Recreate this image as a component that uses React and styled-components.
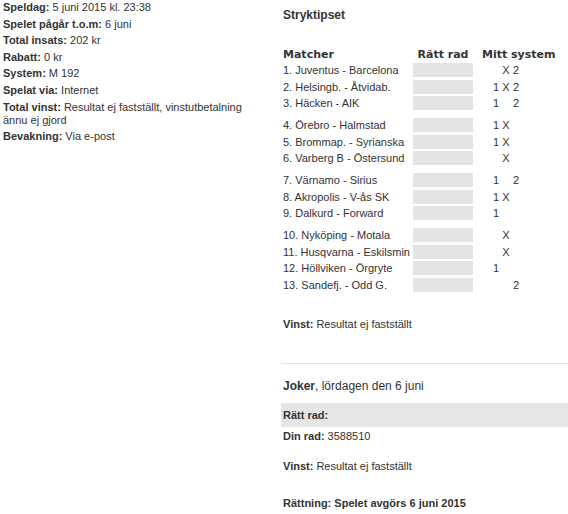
import React from "react";
import styled, { createGlobalStyle } from "styled-components";

const Global = createGlobalStyle`
  html, body { margin: 0; padding: 0; background: #fff; }
  body { font-family: "Liberation Sans", Arial, sans-serif; color: #333; font-size: 11px; }
`;

const Page = styled.div`
  display: grid;
  grid-template-columns: 250px 1fr;
  column-gap: 28px;
  padding-left: 3px;
  width: 568px;
  box-sizing: border-box;
`;

const LeftCol = styled.div`
  display: flex;
  flex-direction: column;
  gap: 3.6px;
  padding-top: 1px;
`;

const InfoLine = styled.div`
  font-size: 11px;
  line-height: 13px;
`;

const Label = styled.b`
  font-weight: bold;
  color: #333;
`;

const RightCol = styled.div`
  display: flex;
  flex-direction: column;
`;

const Inner = styled.div`
  padding-left: 2px;
  display: flex;
  flex-direction: column;
`;

const GameTitle = styled.div`
  font-weight: bold;
  font-size: 12px;
  line-height: 14px;
  margin-top: 8px;
`;

const Table = styled.div`
  margin-top: 24px;
  display: flex;
  flex-direction: column;
`;

const HeadRow = styled.div`
  display: grid;
  grid-template-columns: 130px 60px 1fr;
  height: 16px;
  align-items: center;
  font-family: "DejaVu Sans", Verdana, sans-serif;
  font-weight: bold;
  font-size: 11px;
  color: #333;
  white-space: nowrap;
`;

const HeadCell = styled.div`
  text-align: ${(p) => p.$align || "left"};
  padding-left: ${(p) => p.$pad || 0}px;
`;

const Group = styled.div`
  display: flex;
  flex-direction: column;
  & + & { margin-top: 5.5px; }
`;

const Row = styled.div`
  display: grid;
  grid-template-columns: 130px 60px 1fr;
  height: 16.5px;
  align-items: center;
  font-size: 11px;
`;

const MatchName = styled.div`
  white-space: nowrap;
  overflow: hidden;
`;

const ResultBox = styled.div`
  height: 14px;
  background: #e4e4e4;
`;

const Picks = styled.div`
  display: flex;
  margin-left: 18px;
`;

const Pick = styled.span`
  width: 10px;
  text-align: center;
`;

const Para = styled.div`
  font-size: 11px;
  line-height: 13px;
  margin-top: ${(p) => p.$mt || 0}px;
`;

const Divider = styled.hr`
  border: 0;
  border-top: 1px solid #e2e2e2;
  margin: 32px 0 0 0;
  height: 0;
`;

const JokerTitle = styled.div`
  font-size: 12px;
  line-height: 14px;
  margin-top: 15px;
  padding-left: 2px;
`;

const Band = styled.div`
  margin-top: 10px;
  height: 24px;
  background: #e5e5e5;
  display: flex;
  align-items: center;
  padding-left: 2px;
  font-size: 11px;
  font-weight: bold;
`;

const groups = [
  [
    ["1. Juventus - Barcelona", "", "X", "2"],
    ["2. Helsingb. - Åtvidab.", "1", "X", "2"],
    ["3. Häcken - AIK", "1", "", "2"],
  ],
  [
    ["4. Örebro - Halmstad", "1", "X", ""],
    ["5. Brommap. - Syrianska", "1", "X", ""],
    ["6. Varberg B - Östersund", "", "X", ""],
  ],
  [
    ["7. Värnamo - Sirius", "1", "", "2"],
    ["8. Akropolis - V-ås SK", "1", "X", ""],
    ["9. Dalkurd - Forward", "1", "", ""],
  ],
  [
    ["10. Nyköping - Motala", "", "X", ""],
    ["11. Husqvarna - Eskilsmin", "", "X", ""],
    ["12. Höllviken - Örgryte", "1", "", ""],
    ["13. Sandefj. - Odd G.", "", "", "2"],
  ],
];

const info = [
  ["Speldag:", "5 juni 2015 kl. 23:38"],
  ["Spelet pågår t.o.m:", "6 juni"],
  ["Total insats:", "202 kr"],
  ["Rabatt:", "0 kr"],
  ["System:", "M 192"],
  ["Spelat via:", "Internet"],
  ["Total vinst:", "Resultat ej fastställt, vinstutbetalning ännu ej gjord"],
  ["Bevakning:", "Via e-post"],
];

export default function App() {
  return (
    <>
      <Global />
      <Page>
        <LeftCol>
          {info.map(([l, v]) => (
            <InfoLine key={l}>
              <Label>{l}</Label> {v}
            </InfoLine>
          ))}
        </LeftCol>
        <RightCol>
          <Inner>
            <GameTitle>Stryktipset</GameTitle>
            <Table>
              <HeadRow>
                <HeadCell>Matcher</HeadCell>
                <HeadCell $align="center">Rätt rad</HeadCell>
                <HeadCell $pad={9}>Mitt system</HeadCell>
              </HeadRow>
              {groups.map((g, gi) => (
                <Group key={gi}>
                  {g.map(([name, a, b, c]) => (
                    <Row key={name}>
                      <MatchName>{name}</MatchName>
                      <ResultBox />
                      <Picks>
                        <Pick>{a}</Pick>
                        <Pick>{b}</Pick>
                        <Pick>{c}</Pick>
                      </Picks>
                    </Row>
                  ))}
                </Group>
              ))}
            </Table>
            <Para $mt={25}>
              <Label>Vinst:</Label> Resultat ej fastställt
            </Para>
          </Inner>
          <Divider />
          <JokerTitle>
            <b>Joker</b>, lördagen den 6 juni
          </JokerTitle>
          <Band>Rätt rad:</Band>
          <Inner>
            <Para $mt={3}>
              <Label>Din rad:</Label> 3588510
            </Para>
            <Para $mt={17}>
              <Label>Vinst:</Label> Resultat ej fastställt
            </Para>
            <Para $mt={23.5}>
              <Label>Rättning: Spelet avgörs 6 juni 2015</Label>
            </Para>
          </Inner>
        </RightCol>
      </Page>
    </>
  );
}
